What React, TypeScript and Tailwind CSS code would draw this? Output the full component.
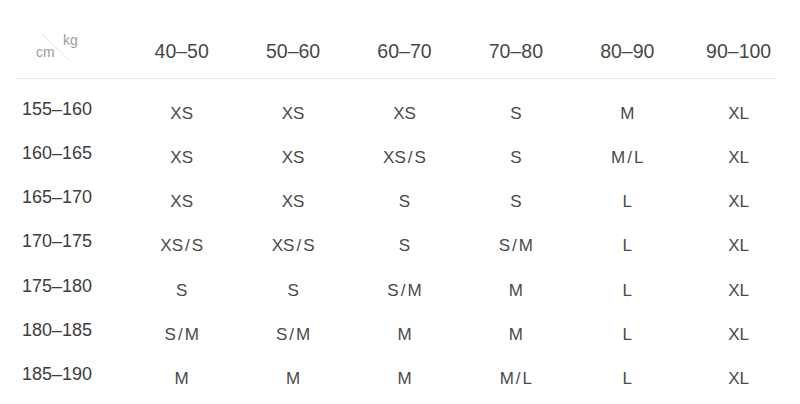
const weights = ['40–50', '50–60', '60–70', '70–80', '80–90', '90–100']

const rows: { height: string; sizes: string[] }[] = [
  { height: '155–160', sizes: ['XS', 'XS', 'XS', 'S', 'M', 'XL'] },
  { height: '160–165', sizes: ['XS', 'XS', 'XS/S', 'S', 'M/L', 'XL'] },
  { height: '165–170', sizes: ['XS', 'XS', 'S', 'S', 'L', 'XL'] },
  { height: '170–175', sizes: ['XS/S', 'XS/S', 'S', 'S/M', 'L', 'XL'] },
  { height: '175–180', sizes: ['S', 'S', 'S/M', 'M', 'L', 'XL'] },
  { height: '180–185', sizes: ['S/M', 'S/M', 'M', 'M', 'L', 'XL'] },
  { height: '185–190', sizes: ['M', 'M', 'M', 'M/L', 'L', 'XL'] },
]

// 슬래시 양옆 간격이 원본 글꼴에서 조금 넓음
function SizeLabel({ value }: { value: string }) {
  const parts = value.split('/')
  return (
    <span>
      {parts.map((p, i) => (
        <span key={i}>
          {i > 0 && <span className="px-[2px]">/</span>}
          {p}
        </span>
      ))}
    </span>
  )
}

export default function App() {
  return (
    <div
      className="h-[404px] w-[800px] overflow-hidden bg-white px-[16px] pt-[26px]"
      style={{ fontFamily: '"Liberation Sans", Arial, sans-serif' }}
    >
      <div className="grid h-[52px] grid-cols-[110px_repeat(6,111.4px)] items-center">
        <div className="relative h-full">
          <svg className="absolute left-0 top-0" width="110" height="52">
            <line x1="26" y1="8" x2="54" y2="35" stroke="#e3e3e3" strokeWidth="1" />
          </svg>
          <span className="absolute left-[20px] top-[19px] text-[14px] leading-none text-[#9c9c9c]">cm</span>
          <span className="absolute left-[47px] top-[7px] text-[14px] leading-none text-[#9c9c9c]">kg</span>
        </div>
        {weights.map((w) => (
          <div key={w} className="text-center text-[19.5px] leading-none text-[#484848]">
            {w}
          </div>
        ))}
      </div>
      <div className="h-px w-[759px] bg-[#e6e6e6]" />
      <div className="pt-[10px]">
        {rows.map((r) => (
          <div key={r.height} className="grid h-[44.2px] grid-cols-[110px_repeat(6,111.4px)] items-center">
            <div className="pb-[4.5px] pl-[6px] text-[18px] leading-none text-[#3c3c3c]">{r.height}</div>
            {r.sizes.map((s, i) => (
              <div key={i} className="pt-[4.5px] text-center text-[17px] leading-none text-[#4a4a4a]">
                <SizeLabel value={s} />
              </div>
            ))}
          </div>
        ))}
      </div>
    </div>
  )
}
